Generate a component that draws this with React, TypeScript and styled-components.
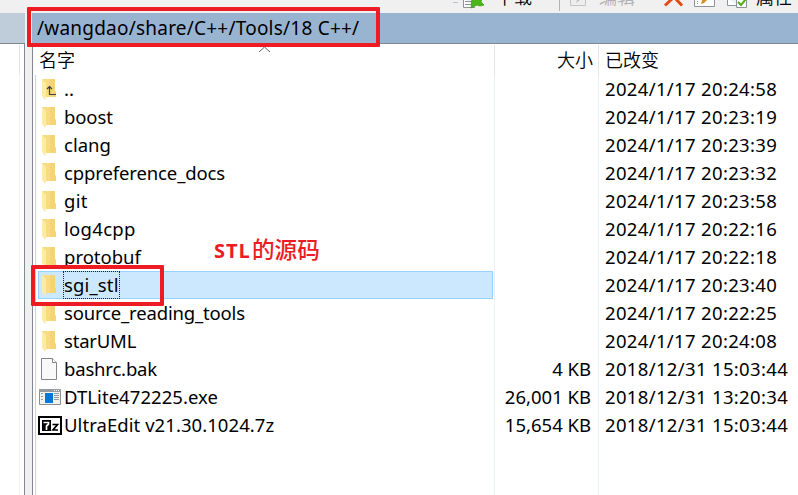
import React from 'react';
import styled, { createGlobalStyle } from 'styled-components';

const GlobalStyle = createGlobalStyle`
  body { margin: 0; background: #fff; overflow: hidden; }
  * { box-sizing: border-box; }
`;

const Window = styled.div`
  width: 798px;
  height: 495px;
  display: flex;
  flex-direction: column;
  overflow: hidden;
  position: relative;
  background: #fff;
  color: #000;
  font: 18.5px/28px 'Noto Sans', 'Noto Sans CJK SC', sans-serif;
`;

const Toolbar = styled.div`
  height: 13px;
  flex: none;
  overflow: hidden;
  background: #f0f0f0;
  display: flex;
  align-items: flex-end;
  padding-left: 453px;
`;

const ToolIcon = styled.svg<{ $ml?: number }>`
  flex: none;
  display: block;
  height: 13px;
  margin-left: ${(p) => p.$ml ?? 0}px;
`;

const ToolLabel = styled.span<{ $w: number; $ml: number; $muted?: boolean }>`
  flex: none;
  width: ${(p) => p.$w}px;
  margin-left: ${(p) => p.$ml}px;
  height: 30px;
  line-height: 28px;
  margin-bottom: 1px;
  font-family: 'Noto Sans CJK SC', sans-serif;
  font-size: 18px;
  font-weight: 350;
  white-space: nowrap;
  color: ${(p) => (p.$muted ? '#b1b1b1' : '#000')};
`;

const Panes = styled.div`
  flex: 1;
  display: flex;
  min-height: 0;
`;

const LeftPane = styled.div`
  width: 25px;
  display: flex;
  flex-direction: column;
`;

const InactivePath = styled.div`
  height: 30px;
  background: #bfcddb;
`;

const LeftBody = styled.div`
  flex: 1;
  border-top: 1px solid #828790;
  border-right: 1px solid #828790;
  display: flex;
  flex-direction: column;
  padding-top: 1px;
`;

const LeftColumn = styled.div<{ $head?: boolean }>`
  width: 20px;
  ${(p) => (p.$head ? 'height: 30px;' : 'flex: 1;')}
  border-right: 1px solid ${(p) => (p.$head ? '#e5e5e5' : '#f0f4fb')};
`;

const Splitter = styled.div`
  width: 7px;
  background: #f0f0f0;
`;

const RightPane = styled.div`
  flex: 1;
  display: flex;
  flex-direction: column;
`;

const PathBar = styled.div`
  height: 30px;
  background: #99b4d1;
  padding-left: 5px;
  font-size: 19px;
  line-height: 31px;
  letter-spacing: 0.22px;
  white-space: pre;
`;

const ListView = styled.div`
  flex: 1;
  border-top: 1px solid #828790;
  border-left: 1px solid #828790;
  display: flex;
  flex-direction: column;
`;

const HeaderRow = styled.div`
  height: 31px;
  display: flex;
  padding-top: 1px;
  font-family: 'Noto Sans CJK SC', sans-serif;
  font-size: 18px;
  font-weight: 350;
  line-height: 29px;
`;

const HeaderCell = styled.div<{ $w: number; $align?: string; $last?: boolean }>`
  width: ${(p) => p.$w}px;
  text-align: ${(p) => p.$align ?? 'left'};
  padding: 0 5px 0 6px;
  border-right: ${(p) => (p.$last ? 'none' : '1px solid #e5e5e5')};
`;

const Grid = styled.div`
  flex: 1;
  display: flex;
`;

const NameColumn = styled.div`
  width: 460px;
  margin-left: 2px;
  border-left: 1px solid #b9d7f5;
  border-right: 1px solid #e8f1fd;
  padding: 0 1px 0 2px;
`;

const SizeColumn = styled.div`
  width: 104px;
  border-right: 1px solid #e8f1fd;
  padding-right: 7px;
  text-align: right;
`;

const DateColumn = styled.div`
  flex: 1;
  padding-left: 6px;
  letter-spacing: 0.34px;
`;

const NameRow = styled.div<{ $selected?: boolean }>`
  height: 28px;
  display: flex;
  align-items: center;
  border: 1px solid ${(p) => (p.$selected ? '#99d1ff' : 'transparent')};
  background: ${(p) => (p.$selected ? '#cce8ff' : 'transparent')};
`;

const Cell = styled.div`
  height: 28px;
  white-space: pre;
`;

const Label = styled.span<{ $ls?: number; $focus?: boolean }>`
  height: 26px;
  line-height: 26px;
  letter-spacing: ${(p) => p.$ls ?? 0}px;
  white-space: pre;
  outline: ${(p) => (p.$focus ? '1px dotted #222' : 'none')};
`;

const IconBox = styled.svg`
  flex: none;
  display: block;
  width: 25px;
  height: 26px;
`;

const Marker = styled.div<{ $x: number; $y: number; $w: number; $h: number }>`
  position: absolute;
  left: ${(p) => p.$x}px;
  top: ${(p) => p.$y}px;
  width: ${(p) => p.$w}px;
  height: ${(p) => p.$h}px;
  border: 4px solid #ed1c24;
  border-radius: 1px;
`;

const SortArrow = styled.svg`
  position: absolute;
  left: 258px;
  top: 46px;
`;

const Note = styled.div`
  position: absolute;
  left: 214px;
  top: 235px;
  height: 30px;
  color: #ed1c24;
  white-space: nowrap;
  display: flex;
`;

const NoteLatin = styled.span`
  font: 700 20px/32px 'Open Sans', 'Noto Sans', sans-serif;
  letter-spacing: 1px;
  width: 38px;
`;

const NoteHan = styled.span`
  font: 500 22.6px/28px 'Noto Sans CJK SC', sans-serif;
`;

type Kind = 'up' | 'folder' | 'file' | 'exe' | 'zip';

function EntryIcon({ kind }: { kind: Kind }) {
  if (kind === 'file') {
    return (
      <IconBox viewBox="0 0 25 26">
        <path d="M2.500 2.500h11l4 4v17h-15z" fill="#f9f9f9" stroke="#858585" />
        <path d="M13.500 2.500v4h4" fill="#fff" stroke="#858585" />
      </IconBox>
    );
  }
  if (kind === 'exe') {
    return (
      <IconBox viewBox="0 0 25 26">
        <path d="M.5 5.500h21v15H.5z" fill="#f2f2f2" stroke="#8c8f92" />
        <path d="M0 5h22v3H0z" fill="#989b9e" />
        <path d="M15 6.500h1m1 0h1m1 0h1" stroke="#fff" />
        <path d="M6 9h8v10H6z" fill="#0078d7" />
        <path d="M2 9.500h2m-2 3h2m-2 3h2M15 9.500h5m-5 2h5m-5 2h5m-5 2h5" stroke="#9b9b9b" />
      </IconBox>
    );
  }
  if (kind === 'zip') {
    return (
      <IconBox viewBox="0 0 25 26" overflow="visible">
        <path d="M0 5h22v17H0z" fill="#fff" stroke="#000" strokeWidth="2" />
        <path d="M3 8h9v11H3z" fill="#000" />
        <path d="M4.500 10.500h5v1.700L7.500 14v4" fill="none" stroke="#fff" strokeWidth="1.700" />
        <path d="M13.500 12.500h5l-4.500 5.500h5" fill="none" stroke="#000" strokeWidth="1.700" />
      </IconBox>
    );
  }
  return (
    <IconBox viewBox="0 0 25 26">
      <path d="M3 3h13v12l1 1v5H6z" fill="#f9db83" />
      <path d="M11 3h5v12l1 1v5h-6z" fill="#f3cd66" opacity=".55" />
      <path d="M3 3l4 4v14.500L6 24l-3-4z" fill="#ffeaa9" />
      {kind === 'up' && (
        <path d="M10.500 10.500v8H17M8 13l2.500-2.500L13 13" fill="none" stroke="#404040" strokeWidth="1.200" />
      )}
    </IconBox>
  );
}

interface Entry {
  name: string;
  kind: Kind;
  size?: string;
  date: string;
  selected?: boolean;
  ls?: number;
}

const entries: Entry[] = [
  { name: '..', kind: 'up', date: '2024/1/17 20:24:58' },
  { name: 'boost', kind: 'folder', date: '2024/1/17 20:23:19', ls: -0.1 },
  { name: 'clang', kind: 'folder', date: '2024/1/17 20:23:39' },
  { name: 'cppreference_docs', kind: 'folder', date: '2024/1/17 20:23:32', ls: -0.12 },
  { name: 'git', kind: 'folder', date: '2024/1/17 20:23:58', ls: 0.3 },
  { name: 'log4cpp', kind: 'folder', date: '2024/1/17 20:22:16', ls: 0.3 },
  { name: 'protobuf', kind: 'folder', date: '2024/1/17 20:22:18' },
  { name: 'sgi_stl', kind: 'folder', date: '2024/1/17 20:23:40', selected: true, ls: 0.15 },
  { name: 'source_reading_tools', kind: 'folder', date: '2024/1/17 20:22:25', ls: -0.17 },
  { name: 'starUML', kind: 'folder', date: '2024/1/17 20:24:08', ls: -0.2 },
  { name: 'bashrc.bak', kind: 'file', size: '4 KB', date: '2018/12/31 15:03:44', ls: -0.18 },
  { name: 'DTLite472225.exe', kind: 'exe', size: '26,001 KB', date: '2018/12/31 13:20:34', ls: 0.05 },
  { name: 'UltraEdit v21.30.1024.7z', kind: 'zip', size: '15,654 KB', date: '2018/12/31 15:03:44', ls: 0.06 },
];

export default function App() {
  return (
    <Window>
      <GlobalStyle />
      <Toolbar>
        <ToolIcon width="32" viewBox="0 0 32 13">
          <path d="M0 2.500h5" stroke="#c0c0c0" />
          <path d="M10.500-2v9.500H22" fill="#fff" stroke="#8d929c" />
          <path d="M12 1.500h7M12 4.500h7" stroke="#8d929c" />
          <path d="M19-2h10l-1 4 3 3-4 1-3-1-6 3z" fill="#4db51c" stroke="#36980c" strokeWidth=".7" />
        </ToolIcon>
        <ToolLabel $ml={11} $w={63}>下载</ToolLabel>
        <ToolIcon width="30" viewBox="0 0 30 13">
          <path d="M.5 0v11" stroke="#b4b4b4" />
          <path d="M11.500-2v7.500h15V-2" fill="#eee" stroke="#c3c3c3" />
          <path d="M17 3l2-5 3 1z" fill="#b9b9b9" />
        </ToolIcon>
        <ToolLabel $ml={10} $w={64} $muted>编辑</ToolLabel>
        <ToolIcon width="88" viewBox="0 0 88 13">
          <path d="M2 5.500L11-3l8 8.500" fill="none" stroke="#e34b13" strokeWidth="3" />
          <path d="M31.500-2v8.500h20V-2" fill="#fff" stroke="#8e949e" />
          <path d="M34.500-1v5" stroke="#999" strokeDasharray="1 1" />
          <path d="M38 4l2-6h6l-5 5z" fill="#d58e13" />
          <path d="M64.500-2v7.500h10" fill="#fff" stroke="#8e949e" />
          <path d="M73.500-2v9.500h10V-2" fill="#fff" stroke="#8e949e" />
          <path d="M75 2l3 3 5-6" fill="none" stroke="#51ae16" strokeWidth="2" />
        </ToolIcon>
        <ToolLabel $ml={5} $w={40}>属性</ToolLabel>
      </Toolbar>
      <Panes>
        <LeftPane>
          <InactivePath />
          <LeftBody>
            <LeftColumn $head />
            <LeftColumn />
          </LeftBody>
        </LeftPane>
        <Splitter />
        <RightPane>
          <PathBar>/wangdao/share/C++/Tools/18 C++/</PathBar>
          <ListView>
            <HeaderRow>
              <HeaderCell $w={462}>名字</HeaderCell>
              <HeaderCell $w={104} $align="right">大小</HeaderCell>
              <HeaderCell $w={199} $last>已改变</HeaderCell>
            </HeaderRow>
            <Grid>
              <NameColumn>
                {entries.map((e) => (
                  <NameRow key={e.name} $selected={e.selected}>
                    <EntryIcon kind={e.kind} />
                    <Label $focus={e.selected} $ls={e.ls}>{e.name}</Label>
                  </NameRow>
                ))}
              </NameColumn>
              <SizeColumn>
                {entries.map((e) => <Cell key={e.name}>{e.size}</Cell>)}
              </SizeColumn>
              <DateColumn>
                {entries.map((e) => <Cell key={e.name}>{e.date}</Cell>)}
              </DateColumn>
            </Grid>
          </ListView>
        </RightPane>
      </Panes>
      <SortArrow width="13" height="7" viewBox="0 0 13 7">
        <path d="M1 6l5.500-5 5.500 5" fill="none" stroke="#606060" />
      </SortArrow>
      <Marker $x={27} $y={7} $w={353} $h={40} />
      <Marker $x={31} $y={265} $w={133} $h={41} />
      <Note>
        <NoteLatin>STL</NoteLatin>
        <NoteHan>的源码</NoteHan>
      </Note>
    </Window>
  );
}
